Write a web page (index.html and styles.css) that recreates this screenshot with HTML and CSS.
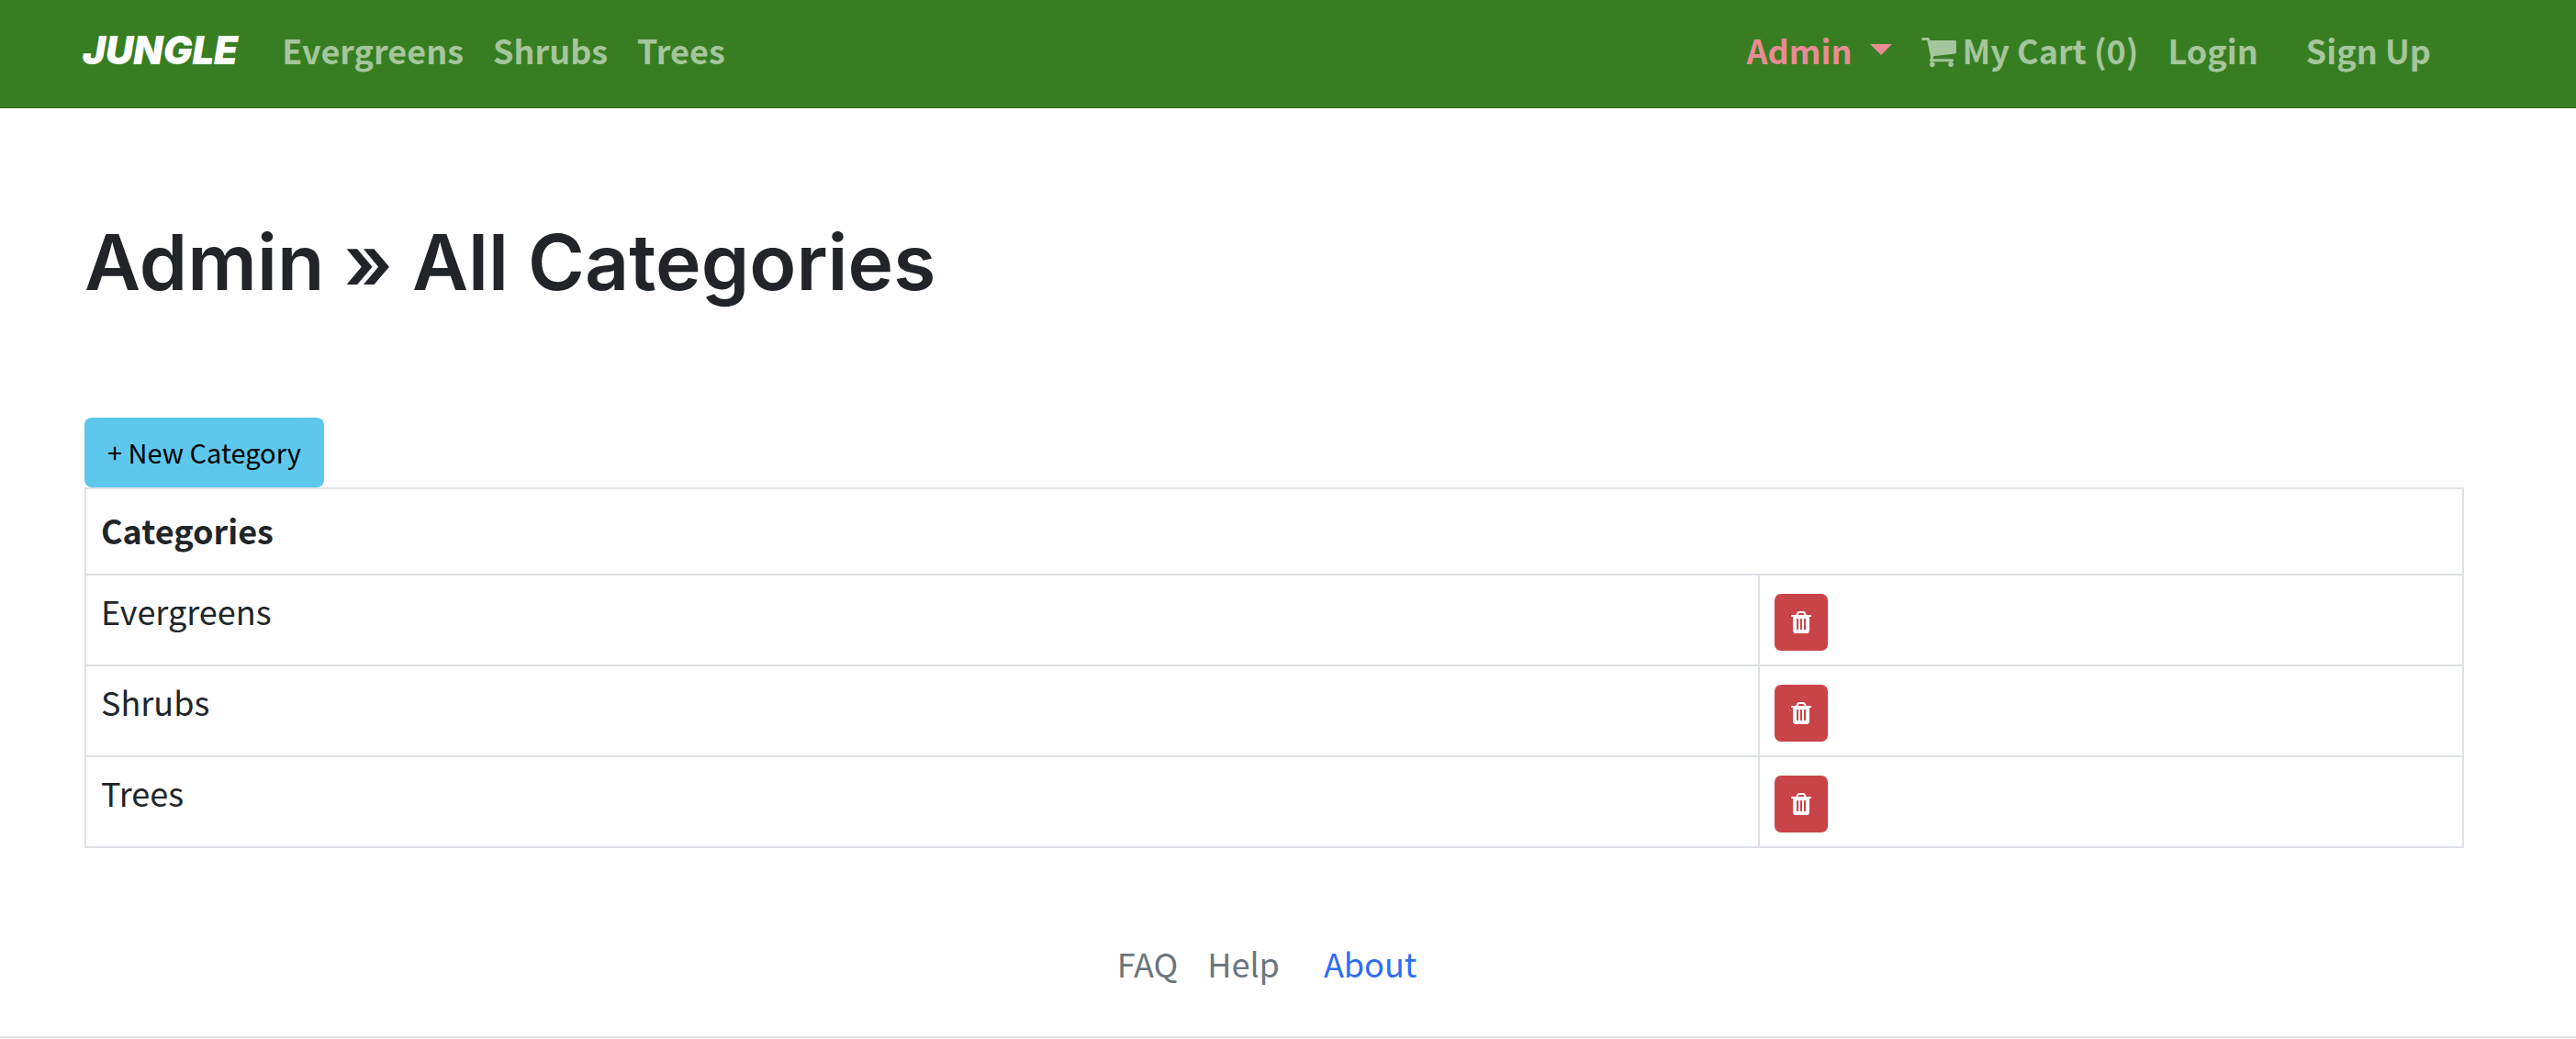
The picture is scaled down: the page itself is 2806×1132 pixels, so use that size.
FILE: index.html
```html
<!DOCTYPE html>
<html lang="en">
<head>
<meta charset="utf-8">
<meta name="viewport" content="width=device-width, initial-scale=1">
<title>Jungle</title>
<link rel="stylesheet" href="styles.css">
</head>
<body>
<svg class="sprite" aria-hidden="true">
  <symbol id="trash" viewBox="192 128 1408 1536"><path d="M704 1376v-704q0-14-9-23t-23-9h-64q-14 0-23 9t-9 23v704q0 14 9 23t23 9h64q14 0 23-9t9-23zm256 0v-704q0-14-9-23t-23-9h-64q-14 0-23 9t-9 23v704q0 14 9 23t23 9h64q14 0 23-9t9-23zm256 0v-704q0-14-9-23t-23-9h-64q-14 0-23 9t-9 23v704q0 14 9 23t23 9h64q14 0 23-9t9-23zm-544-992h448l-48-117q-7-9-17-11h-317q-10 2-17 11zm928 32v64q0 14-9 23t-23 9h-96v948q0 83-47 143.500t-113 60.500h-832q-66 0-113-58.500t-47-141.500v-952h-96q-14 0-23-9t-9-23v-64q0-14 9-23t23-9h309l70-167q15-37 54-63t79-26h320q40 0 79 26t54 63l70 167h309q14 0 23 9t9 23z"/></symbol>
</svg>
<header class="navbar">
  <a class="brand" href="#">JUNGLE</a>
  <nav class="nav">
    <a href="#">Evergreens</a>
    <a href="#">Shrubs</a>
    <a href="#">Trees</a>
  </nav>
  <nav class="nav nav-end">
    <a class="admin" href="#">Admin<span class="caret"></span></a>
    <a class="cart" href="#"><svg class="cart-icon" viewBox="64 256 1664 1408" aria-hidden="true"><path d="M704 1536q0 52-38 90t-90 38-90-38-38-90 38-90 90-38 90 38 38 90zm896 0q0 52-38 90t-90 38-90-38-38-90 38-90 90-38 90 38 38 90zm128-1088v512q0 24-16.500 42.500t-40.500 21.500l-1044 122q13 60 13 70 0 16-24 64h920q26 0 45 19t19 45-19 45-45 19h-1024q-26 0-45-19t-19-45q0-11 8-31.500t16-36 21.500-40 15.500-29.500l-177-823h-204q-26 0-45-19t-19-45 19-45 45-19h256q16 0 28.500 6.500t19.500 15.500 13 24.500 8 26 5.500 29.500 4.500 26h1201q26 0 45 19t19 45z"/></svg>My Cart (0)</a>
    <a href="#">Login</a>
    <a class="signup" href="#">Sign Up</a>
  </nav>
</header>
<main class="content">
  <h1>Admin » All Categories</h1>
  <a class="new-button" href="#">+ New Category</a>
  <table>
    <colgroup><col class="name-col"><col></colgroup>
    <thead><tr><th colspan="2" scope="col">Categories</th></tr></thead>
    <tbody>
      <tr><td>Evergreens</td><td class="action"><button type="button" aria-label="Delete Evergreens"><svg><use href="#trash"/></svg></button></td></tr>
      <tr><td>Shrubs</td><td class="action"><button type="button" aria-label="Delete Shrubs"><svg><use href="#trash"/></svg></button></td></tr>
      <tr><td>Trees</td><td class="action"><button type="button" aria-label="Delete Trees"><svg><use href="#trash"/></svg></button></td></tr>
    </tbody>
  </table>
</main>
<footer class="footer">
  <a href="#">FAQ</a>
  <a href="#">Help</a>
  <a class="about" href="#">About</a>
</footer>
</body>
</html>
```
FILE: styles.css
```css
* { box-sizing: border-box; }
body {
  margin: 0;
  background: #fff;
  color: #212529;
  font: 36px/52px "Noto Sans CJK SC", "Noto Sans", sans-serif;
}
a { color: inherit; text-decoration: none; }
.sprite { display: none; }

.navbar {
  display: flex;
  align-items: baseline;
  padding: 28px 158px 36px 90px;
  background: #377e22;
  border-bottom: 1px solid #2f701c;
  color: #a5c59c;
  font-weight: 700;
  white-space: nowrap;
}
.brand {
  margin-right: 48px;
  color: #fff;
  font: italic 900 42px/52px Inter, sans-serif;
}
.nav { display: flex; gap: 32px; }
.nav-end { margin-left: auto; }
.admin { display: flex; align-items: center; gap: 20px; color: #e98b94; }
.caret {
  border: 12px solid transparent;
  border-top-color: currentColor;
  border-bottom: 0;
}
.cart { display: flex; align-items: center; gap: 6px; }
.cart-icon { width: 38px; height: 32px; margin-top: 6px; fill: currentColor; }
.signup { margin-left: 20px; }

.content { padding: 120px 122px 0 92px; }
h1 {
  margin: 0 0 121px;
  font: 600 84px/96px Inter, sans-serif;
}
.new-button {
  display: block;
  width: fit-content;
  padding: 11px 25px 13px;
  border-radius: 8px;
  background: #5ec8ec;
  color: #000;
  font-size: 29px;
}

table { width: 100%; border-collapse: collapse; table-layout: fixed; }
.name-col { width: 70.4%; }
th, td { border: 2px solid #dee2e6; vertical-align: top; text-align: left; }
th { padding: 18px 16px 22px; }
td { padding: 12px 16px; }
.action { padding: 20px 16px 15px; }
button {
  display: flex;
  align-items: center;
  justify-content: center;
  width: 58px;
  height: 62px;
  padding: 0;
  border: 0;
  border-radius: 7px;
  background: #c94449;
}
button svg { width: 22px; height: 24px; fill: #fff; }

.footer {
  display: flex;
  justify-content: center;
  gap: 32px;
  padding: 99px 46px 54px 0;
  border-bottom: 2px solid #dee2e6;
  color: #6c757d;
}
.about { margin-left: 16px; color: #2d6df6; }
```
